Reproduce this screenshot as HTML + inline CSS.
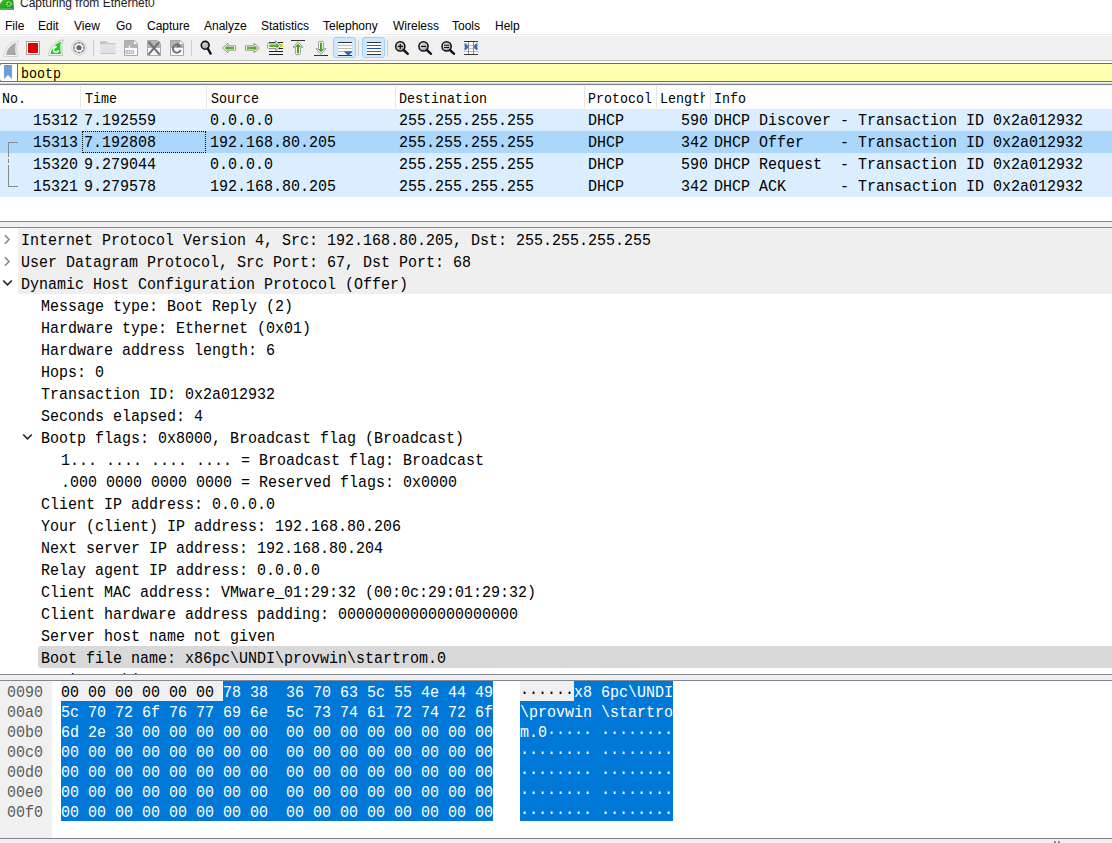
<!DOCTYPE html><html><head><meta charset="utf-8"><style>
*{margin:0;padding:0;box-sizing:border-box}
html,body{width:1112px;height:843px;overflow:hidden;background:#fff}
body{position:relative;font-family:"Liberation Sans",sans-serif;color:#000}
.a{position:absolute}
.m{font-family:"Liberation Mono",monospace;white-space:pre}
.menu{top:19px;font-size:12px;line-height:15px;white-space:nowrap;color:#000}
.hdr{top:86px;height:22px;font-size:13.333px;line-height:22px;overflow:hidden}
.hdr span{display:inline-block;transform:translateY(1.5px) scaleY(1.08);transform-origin:0 0}
.sep{top:86px;width:1px;height:22px;background:#e5e5e5}
.row{left:0;width:1112px;height:22px;background:#daeeff}
.row span{position:absolute;top:0;font-size:15px;line-height:22px;transform:translateY(0.6px) scaleY(1.1);transform-origin:0 0}
.det{height:22px;font-size:15px;line-height:22px;transform:translateY(1.6px) scaleY(1.1);transform-origin:0 0}
.hex{height:20px;font-size:15px;line-height:20px;transform:translateY(1.7px) scaleY(1.1);transform-origin:0 0}
</style></head><body>
<svg class="a" style="left:0;top:0" width="16" height="11"><defs><linearGradient id="tg" x1="0" y1="0" x2="1" y2="1"><stop offset="0" stop-color="#3cc21e"/><stop offset="1" stop-color="#158a20"/></linearGradient></defs><path d="M0 9.8 L0 3.5 L2.8 0 L13.2 0 L14 9.8 Z" fill="url(#tg)"/><path d="M1 8.6 H13" stroke="#7cc47c" stroke-width="0.8" opacity="0.7"/><circle cx="9" cy="4.1" r="2.2" fill="none" stroke="#d8ecd8" stroke-width="1.3" stroke-dasharray="1 0.8"/></svg>
<div class="a" style="left:20px;top:-4px;font-size:12px;line-height:14px;white-space:nowrap;color:#1a1a1a">Capturing from Ethernet0</div>
<div class="a menu" style="left:5px">File</div>
<div class="a menu" style="left:38px">Edit</div>
<div class="a menu" style="left:74px">View</div>
<div class="a menu" style="left:116px">Go</div>
<div class="a menu" style="left:147px">Capture</div>
<div class="a menu" style="left:204px">Analyze</div>
<div class="a menu" style="left:261px">Statistics</div>
<div class="a menu" style="left:323px">Telephony</div>
<div class="a menu" style="left:393px">Wireless</div>
<div class="a menu" style="left:452px">Tools</div>
<div class="a menu" style="left:495px">Help</div>
<div class="a" style="left:0;top:34px;width:1112px;height:1px;background:#efefef"></div>
<div class="a" style="left:0;top:36px;width:1112px;height:24px;background:#f0f0f0"></div>
<div class="a" style="left:0;top:60px;width:1112px;height:1px;background:#bebebe"></div>
<svg class="a" style="left:0;top:35px" width="500" height="26" viewBox="0 35 500 26">
<defs>
<linearGradient id="gfold" x1="0" y1="0" x2="0" y2="1"><stop offset="0" stop-color="#c4c4c4"/><stop offset="1" stop-color="#dedede"/></linearGradient>
<linearGradient id="gmag" x1="0" y1="0" x2="1" y2="1"><stop offset="0" stop-color="#e8e8e8"/><stop offset="1" stop-color="#9a9a9a"/></linearGradient>
</defs>
<!-- shark fin gray -->
<path d="M3.5 56.5 C4.5 48 10 42 18.5 41 L17.2 43.5 C16.5 48 16.5 52 17.8 56.5 Z" fill="#f7f7f7" stroke="#d2d2d2" stroke-width="1"/>
<path d="M6 55 C7.2 49 10.5 44.8 16 43 C15 46 15 51 16 55 Z" fill="#a8a8a8"/>
<!-- stop -->
<rect x="26.5" y="41.5" width="13" height="13" fill="#fdfdfd" stroke="#a2a2a2" stroke-width="1"/>
<rect x="28" y="43" width="10" height="10" fill="#e00000"/>
<!-- restart fin green -->
<path d="M48.5 55.5 C49.5 47 55 41 63.5 40 L62.2 42.5 C61.5 47 61.5 51 62.8 55.5 Z" fill="#f7f7f7" stroke="#c4c4c4" stroke-width="1"/>
<path d="M50.5 54 C51.8 48 55.5 43.5 61 41.8 C60 45 60 50 61 54 Z" fill="#1ecf1e"/>
<path d="M58.6 50.2 A2.6 2.6 0 1 1 55.6 47" fill="none" stroke="#fff" stroke-width="1.5"/>
<path d="M54.2 45.2 L57.4 46.8 L54.6 49 Z" fill="#fff"/>
<!-- gear -->
<circle cx="79" cy="47.7" r="7.3" fill="#f8f8f8" stroke="#cdcdcd" stroke-width="1"/>
<circle cx="79" cy="47.7" r="5.9" fill="#8c8c8c"/>
<circle cx="79" cy="47.7" r="3.3" fill="none" stroke="#fff" stroke-width="1.3"/>
<path d="M82.05 48.96 L83.53 49.58" stroke="#fff" stroke-width="1.5"/><path d="M80.26 50.75 L80.88 52.23" stroke="#fff" stroke-width="1.5"/><path d="M77.74 50.75 L77.12 52.23" stroke="#fff" stroke-width="1.5"/><path d="M75.95 48.96 L74.47 49.58" stroke="#fff" stroke-width="1.5"/><path d="M75.95 46.44 L74.47 45.82" stroke="#fff" stroke-width="1.5"/><path d="M77.74 44.65 L77.12 43.17" stroke="#fff" stroke-width="1.5"/><path d="M80.26 44.65 L80.88 43.17" stroke="#fff" stroke-width="1.5"/><path d="M82.05 46.44 L83.53 45.82" stroke="#fff" stroke-width="1.5"/>
<circle cx="79" cy="47.7" r="2.3" fill="#6a6a6a"/>
<!-- sep -->
<rect x="93" y="40" width="1" height="16" fill="#cdcdcd"/>
<!-- folder -->
<path d="M100 42.2 Q100 41 101.2 41 L106.3 41 L108 43 L115.6 43 L115.6 44.5 L100 44.5 Z" fill="#c7c7c7"/>
<rect x="100.2" y="45.2" width="15.4" height="8.6" fill="#e1e1e1"/>
<rect x="100.6" y="53" width="14.8" height="1" fill="#c6c6c6"/>
<!-- doc 010 -->
<path d="M124.5 40.5 L134.5 40.5 L137.5 43.5 L137.5 55.5 L124.5 55.5 Z" fill="#fbfbfb" stroke="#a9a9a9"/>
<path d="M125 41 L134.3 41 L137 43.8 L137 48 L125 48 Z" fill="#b3b3b3"/>
<path d="M134 41 L137 44 L134 44 Z" fill="#fff"/>
<path d="M128.5 47.8 L129.5 45 L130.5 47.8 Z" fill="#fff"/>
<text x="125.2" y="54.2" font-family="Liberation Sans" font-weight="bold" font-size="5.6" fill="#9c9c9c" letter-spacing="-0.2">010</text>
<!-- close doc -->
<path d="M147.5 40.5 L157.5 40.5 L160.5 43.5 L160.5 55.5 L147.5 55.5 Z" fill="#fbfbfb" stroke="#a9a9a9"/>
<path d="M148 41 L157.3 41 L160 43.8 L160 48 L148 48 Z" fill="#b3b3b3"/>
<path d="M157 41 L160 44 L157 44 Z" fill="#fff"/>
<path d="M148.6 41.8 L159.6 54.6 M159.4 41.8 L148.4 54.6" stroke="#707070" stroke-width="2.1"/>
<!-- reload doc -->
<path d="M170.5 40.5 L180.5 40.5 L183.5 43.5 L183.5 55.5 L170.5 55.5 Z" fill="#fbfbfb" stroke="#a9a9a9"/>
<path d="M171 41 L180.3 41 L183 43.8 L183 48 L171 48 Z" fill="#b3b3b3"/>
<path d="M180 41 L183 44 L180 44 Z" fill="#fff"/>
<path d="M178.6 45 A4 4 0 1 0 180.6 50.2" fill="none" stroke="#707070" stroke-width="2"/>
<path d="M181.8 46.8 L177.2 42.6 L176.6 47.6 Z" fill="#707070"/>
<!-- sep -->
<rect x="191" y="40" width="1" height="16" fill="#cdcdcd"/>
<!-- find -->
<circle cx="205.2" cy="45.3" r="3.9" fill="url(#gmag)" stroke="#111" stroke-width="1.6"/>
<path d="M207.8 48.5 L210.6 53.6" stroke="#111" stroke-width="2.4" stroke-linecap="round"/>
<!-- back -->
<path d="M222.5 48 L228 43.2 L228 45.8 L235.5 45.8 L235.5 50.2 L228 50.2 L228 52.8 Z" fill="#fff" stroke="#8a8a8a" stroke-width="0.9"/>
<path d="M224.5 48 L227.6 45.2 L227.6 46.8 L234 46.8 L234 49.2 L227.6 49.2 L227.6 50.8 Z" fill="#54b02a"/>
<!-- fwd -->
<path d="M259.5 48 L254 43.2 L254 45.8 L245.5 45.8 L245.5 50.2 L254 50.2 L254 52.8 Z" fill="#fff" stroke="#8a8a8a" stroke-width="0.9"/>
<path d="M257.5 48 L254.4 45.2 L254.4 46.8 L247 46.8 L247 49.2 L254.4 49.2 L254.4 50.8 Z" fill="#54b02a"/>
<!-- go to packet -->
<rect x="269" y="42" width="14" height="1" fill="#222"/>
<rect x="269" y="48" width="14" height="1" fill="#222"/>
<rect x="269" y="51" width="14" height="1" fill="#222"/>
<rect x="269" y="54" width="14" height="1" fill="#222"/>
<rect x="280" y="44" width="3" height="3" fill="#f5da20"/>
<path d="M281.5 45.8 L275.5 40.8 L275.5 43.2 L268.8 43.2 Q267.5 43.2 267.5 44.5 L267.5 47.1 Q267.5 48.4 268.8 48.4 L275.5 48.4 L275.5 50.8 Z" fill="#fff" stroke="#8c8c8c" stroke-width="0.9"/>
<path d="M279.8 45.8 L276.2 42.8 L276.2 44.6 L269.3 44.6 L269.3 47 L276.2 47 L276.2 48.8 Z" fill="#58b228"/>
<!-- first packet -->
<rect x="291" y="40" width="14" height="1" fill="#333"/>
<path d="M298 41.8 L293 47.2 L295.6 47.2 L295.6 53.5 Q295.6 54.6 296.7 54.6 L299.3 54.6 Q300.4 54.6 300.4 53.5 L300.4 47.2 L303 47.2 Z" fill="#fff" stroke="#8c8c8c" stroke-width="0.9"/>
<path d="M298 43.6 L295 46.9 L297 46.9 L297 53.2 L299 53.2 L299 46.9 L301 46.9 Z" fill="#46a31c"/>
<!-- last packet -->
<rect x="314" y="55" width="14" height="1" fill="#333"/>
<path d="M321 54.2 L316 48.8 L318.6 48.8 L318.6 42.5 Q318.6 41.4 319.7 41.4 L322.3 41.4 Q323.4 41.4 323.4 42.5 L323.4 48.8 L326 48.8 Z" fill="#fff" stroke="#8c8c8c" stroke-width="0.9"/>
<path d="M321 52.4 L318 49.1 L320 49.1 L320 42.8 L322 42.8 L322 49.1 L324 49.1 Z" fill="#46a31c"/>
<!-- autoscroll button -->
<rect x="333.5" y="37.5" width="22" height="20" rx="2.5" fill="#cce8ff" stroke="#99d1ff"/>
<rect x="338" y="42" width="14" height="14" fill="#fcfcfa"/>
<rect x="338" y="42" width="14" height="1" fill="#333"/>
<rect x="338" y="45" width="14" height="1" fill="#b8bcb8"/>
<rect x="338" y="48" width="14" height="1" fill="#b8bcb8"/>
<rect x="338" y="51" width="14" height="1" fill="#b8bcb8"/>
<rect x="338" y="55" width="14" height="1" fill="#333"/>
<path d="M344.5 51.2 Q344 53 346.5 54 L347.5 55.5 L349 55.5 L350 54 Q352.5 53 352 51.2 Z" fill="#2f6ab0"/>
<!-- sep -->
<rect x="358" y="40" width="1" height="16" fill="#cdcdcd"/>
<!-- colorize button -->
<rect x="362.5" y="37.5" width="22" height="20" rx="2.5" fill="#cce8ff" stroke="#99d1ff"/>
<rect x="367" y="42" width="14" height="13" fill="#fcfcfa"/>
<rect x="367" y="42" width="14" height="1" fill="#333"/>
<rect x="367" y="45" width="14" height="1" fill="#e02020"/>
<rect x="367" y="48" width="14" height="1" fill="#2850a0"/>
<rect x="367" y="51" width="14" height="1" fill="#705090"/>
<rect x="367" y="54" width="14" height="1" fill="#333"/>
<!-- sep -->
<rect x="387" y="40" width="1" height="16" fill="#cdcdcd"/>
<!-- zoom in/out/normal -->
<g>
<circle cx="400.3" cy="46.4" r="4.6" fill="url(#gmag)" stroke="#111" stroke-width="1.5"/>
<path d="M403.6 50 L407.8 53.8" stroke="#111" stroke-width="2.4" stroke-linecap="round"/>
<path d="M397.8 46.4 H402.8 M400.3 43.9 V48.9" stroke="#111" stroke-width="1.2"/>
<circle cx="423.5" cy="46.4" r="4.6" fill="url(#gmag)" stroke="#111" stroke-width="1.5"/>
<path d="M426.8 50 L431 53.8" stroke="#111" stroke-width="2.4" stroke-linecap="round"/>
<path d="M421 46.4 H426" stroke="#111" stroke-width="1.2"/>
<circle cx="446.6" cy="46.4" r="4.6" fill="url(#gmag)" stroke="#111" stroke-width="1.5"/>
<path d="M449.9 50 L454.1 53.8" stroke="#111" stroke-width="2.4" stroke-linecap="round"/>
<path d="M444.1 45.3 H449.1 M444.1 47.5 H449.1" stroke="#111" stroke-width="1.1"/>
</g>
<!-- resize columns -->
<rect x="464" y="41" width="14" height="14" fill="#fbfbfb"/>
<rect x="464" y="41" width="14" height="1" fill="#333"/>
<rect x="464" y="54" width="14" height="1" fill="#333"/>
<rect x="464" y="45" width="14" height="1" fill="#c0c0c0"/>
<rect x="464" y="48" width="14" height="1" fill="#c0c0c0"/>
<rect x="464" y="51" width="14" height="1" fill="#c0c0c0"/>
<rect x="468" y="42" width="1" height="12" fill="#8a8a8a"/>
<rect x="473" y="42" width="1" height="12" fill="#8a8a8a"/>
<path d="M464.6 42.8 Q466.5 43.5 468.6 46.8 Q466.5 50 464.6 50.8 Z" fill="#356fbd"/>
<path d="M477.4 42.8 Q475.5 43.5 473.4 46.8 Q475.5 50 477.4 50.8 Z" fill="#356fbd"/>
</svg>

<div class="a" style="left:0;top:63px;width:1112px;height:19px;background:#ffffaf;border-top:1px solid #6d6d6d;border-bottom:1px solid #6d6d6d"></div>
<div class="a" style="left:-1px;top:63px;width:19px;height:19px;background:#fff;border:1px solid #6d6d6d;border-radius:3px 0 0 3px"></div>
<svg class="a" style="left:4px;top:65px" width="9" height="15"><path d="M0 0 H8 V14 L4 10 L0 14 Z" fill="#6a9fd6"/></svg>
<div class="a m" style="left:21px;top:63px;font-size:13.333px;line-height:19px"><span style="display:inline-block;transform:translateY(1px) scaleY(1.1);transform-origin:0 0">bootp</span></div>
<div class="a" style="left:0;top:82px;width:1112px;height:1px;background:#fafafa"></div>
<div class="a" style="left:0;top:83px;width:1112px;height:1px;background:#cfd0d3"></div>
<div class="a" style="left:0;top:84px;width:1112px;height:1px;background:#828892"></div>
<div class="a" style="left:0;top:85px;width:1112px;height:1px;background:#f2f2f3"></div>
<div class="a m hdr" style="left:2px;width:70px"><span>No.</span></div>
<div class="a m hdr" style="left:85px;width:110px"><span>Time</span></div>
<div class="a m hdr" style="left:211px;width:180px"><span>Source</span></div>
<div class="a m hdr" style="left:399px;width:180px"><span>Destination</span></div>
<div class="a m hdr" style="left:588px;width:66px"><span>Protocol</span></div>
<div class="a m hdr" style="left:660px;width:45px"><span>Length</span></div>
<div class="a m hdr" style="left:714px;width:200px"><span>Info</span></div>
<div class="a sep" style="left:80px"></div>
<div class="a sep" style="left:206px"></div>
<div class="a sep" style="left:395px"></div>
<div class="a sep" style="left:584px"></div>
<div class="a sep" style="left:656px"></div>
<div class="a sep" style="left:710px"></div>
<div class="a row m" style="top:109px"><span style="left:33px">15312</span><span style="left:84px">7.192559</span><span style="left:210px">0.0.0.0</span><span style="left:399px">255.255.255.255</span><span style="left:588px">DHCP</span><span style="left:681px">590</span><span style="left:714px">DHCP Discover - Transaction ID 0x2a012932</span></div>
<div class="a row m" style="top:131px;background:#abd7fd"><span style="left:33px">15313</span><span style="left:84px">7.192808</span><span style="left:210px">192.168.80.205</span><span style="left:399px">255.255.255.255</span><span style="left:588px">DHCP</span><span style="left:681px">342</span><span style="left:714px">DHCP Offer    - Transaction ID 0x2a012932</span></div>
<div class="a row m" style="top:153px"><span style="left:33px">15320</span><span style="left:84px">9.279044</span><span style="left:210px">0.0.0.0</span><span style="left:399px">255.255.255.255</span><span style="left:588px">DHCP</span><span style="left:681px">590</span><span style="left:714px">DHCP Request  - Transaction ID 0x2a012932</span></div>
<div class="a row m" style="top:175px"><span style="left:33px">15321</span><span style="left:84px">9.279578</span><span style="left:210px">192.168.80.205</span><span style="left:399px">255.255.255.255</span><span style="left:588px">DHCP</span><span style="left:681px">342</span><span style="left:714px">DHCP ACK      - Transaction ID 0x2a012932</span></div>
<div class="a" style="left:82px;top:131px;width:124px;height:22px;border:1px dotted #000"></div>
<div class="a" style="left:8px;top:142px;width:10px;height:1px;background:#8a8a8a"></div>
<div class="a" style="left:8px;top:142px;width:1px;height:15px;background:#8a8a8a"></div>
<div class="a" style="left:8px;top:159px;width:1px;height:4px;background:#8a8a8a"></div>
<div class="a" style="left:8px;top:165px;width:1px;height:22px;background:#8a8a8a"></div>
<div class="a" style="left:8px;top:186px;width:10px;height:1px;background:#8a8a8a"></div>
<div class="a" style="left:0;top:221px;width:1112px;height:7px;background:#f0f0f0;border-top:1px solid #828790;border-bottom:1px solid #828790"></div>
<div class="a" style="left:0;top:228px;width:1112px;height:446px;overflow:hidden">
<div class="a" style="left:18px;top:0;width:1094px;height:66px;background:#efefef"></div>
<div class="a" style="left:38px;top:418px;width:1074px;height:22px;background:#d9d9d9;border-radius:3px 0 0 3px"></div>
<div class="a det m" style="top:0px;left:21px">Internet Protocol Version 4, Src: 192.168.80.205, Dst: 255.255.255.255</div>
<svg class="a" style="left:4px;top:6px" width="8" height="12"><path d="M0.9 1.2 L5 5.5 L0.9 9.8" fill="none" stroke="#858585" stroke-width="1.5"/></svg>
<div class="a det m" style="top:22px;left:21px">User Datagram Protocol, Src Port: 67, Dst Port: 68</div>
<svg class="a" style="left:4px;top:28px" width="8" height="12"><path d="M0.9 1.2 L5 5.5 L0.9 9.8" fill="none" stroke="#858585" stroke-width="1.5"/></svg>
<div class="a det m" style="top:44px;left:21px">Dynamic Host Configuration Protocol (Offer)</div>
<svg class="a" style="left:2px;top:51px" width="11" height="8"><path d="M1.2 1.5 L5.5 5.8 L9.8 1.5" fill="none" stroke="#262626" stroke-width="1.7"/></svg>
<div class="a det m" style="top:66px;left:41px">Message type: Boot Reply (2)</div>
<div class="a det m" style="top:88px;left:41px">Hardware type: Ethernet (0x01)</div>
<div class="a det m" style="top:110px;left:41px">Hardware address length: 6</div>
<div class="a det m" style="top:132px;left:41px">Hops: 0</div>
<div class="a det m" style="top:154px;left:41px">Transaction ID: 0x2a012932</div>
<div class="a det m" style="top:176px;left:41px">Seconds elapsed: 4</div>
<div class="a det m" style="top:198px;left:41px">Bootp flags: 0x8000, Broadcast flag (Broadcast)</div>
<svg class="a" style="left:22px;top:205px" width="11" height="8"><path d="M1.2 1.5 L5.5 5.8 L9.8 1.5" fill="none" stroke="#262626" stroke-width="1.7"/></svg>
<div class="a det m" style="top:220px;left:61px">1... .... .... .... = Broadcast flag: Broadcast</div>
<div class="a det m" style="top:242px;left:61px">.000 0000 0000 0000 = Reserved flags: 0x0000</div>
<div class="a det m" style="top:264px;left:41px">Client IP address: 0.0.0.0</div>
<div class="a det m" style="top:286px;left:41px">Your (client) IP address: 192.168.80.206</div>
<div class="a det m" style="top:308px;left:41px">Next server IP address: 192.168.80.204</div>
<div class="a det m" style="top:330px;left:41px">Relay agent IP address: 0.0.0.0</div>
<div class="a det m" style="top:352px;left:41px">Client MAC address: VMware_01:29:32 (00:0c:29:01:29:32)</div>
<div class="a det m" style="top:374px;left:41px">Client hardware address padding: 00000000000000000000</div>
<div class="a det m" style="top:396px;left:41px">Server host name not given</div>
<div class="a det m" style="top:418px;left:41px">Boot file name: x86pc\UNDI\provwin\startrom.0</div>
<div class="a det m" style="top:440px;left:41px">Magic cookie: DHCP</div>
</div>
<div class="a" style="left:0;top:674px;width:1112px;height:7px;background:#f0f0f0;border-top:1px solid #828790;border-bottom:1px solid #828790"></div>
<div class="a" style="left:0;top:681px;width:52px;height:157px;background:#f0f0f0"></div>
<div class="a" style="left:223px;top:681px;width:270px;height:20px;background:#0078d7"></div>
<div class="a" style="left:61px;top:701px;width:432px;height:120px;background:#0078d7"></div>
<div class="a" style="left:61px;top:681px;width:162px;height:20px;background:#f0f0f0"></div>
<div class="a" style="left:574px;top:681px;width:99px;height:20px;background:#0078d7"></div>
<div class="a" style="left:520px;top:701px;width:153px;height:120px;background:#0078d7"></div>
<div class="a" style="left:520px;top:681px;width:54px;height:20px;background:#f0f0f0"></div>
<div class="a hex m" style="top:681px;left:7px;color:#5c5c5c">0090</div>
<div class="a hex m" style="top:681px;left:61px">00 00 00 00 00 00 <span style="color:#fff">78 38  36 70 63 5c 55 4e 44 49</span></div>
<div class="a hex m" style="top:681px;left:520px">······<span style="color:#fff">x8 6pc\UNDI</span></div>
<div class="a hex m" style="top:701px;left:7px;color:#5c5c5c">00a0</div>
<div class="a hex m" style="top:701px;left:61px;color:#fff">5c 70 72 6f 76 77 69 6e  5c 73 74 61 72 74 72 6f</div>
<div class="a hex m" style="top:701px;left:520px;color:#fff">\provwin \startro</div>
<div class="a hex m" style="top:721px;left:7px;color:#5c5c5c">00b0</div>
<div class="a hex m" style="top:721px;left:61px;color:#fff">6d 2e 30 00 00 00 00 00  00 00 00 00 00 00 00 00</div>
<div class="a hex m" style="top:721px;left:520px;color:#fff">m.0····· ········</div>
<div class="a hex m" style="top:741px;left:7px;color:#5c5c5c">00c0</div>
<div class="a hex m" style="top:741px;left:61px;color:#fff">00 00 00 00 00 00 00 00  00 00 00 00 00 00 00 00</div>
<div class="a hex m" style="top:741px;left:520px;color:#fff">········ ········</div>
<div class="a hex m" style="top:761px;left:7px;color:#5c5c5c">00d0</div>
<div class="a hex m" style="top:761px;left:61px;color:#fff">00 00 00 00 00 00 00 00  00 00 00 00 00 00 00 00</div>
<div class="a hex m" style="top:761px;left:520px;color:#fff">········ ········</div>
<div class="a hex m" style="top:781px;left:7px;color:#5c5c5c">00e0</div>
<div class="a hex m" style="top:781px;left:61px;color:#fff">00 00 00 00 00 00 00 00  00 00 00 00 00 00 00 00</div>
<div class="a hex m" style="top:781px;left:520px;color:#fff">········ ········</div>
<div class="a hex m" style="top:801px;left:7px;color:#5c5c5c">00f0</div>
<div class="a hex m" style="top:801px;left:61px;color:#fff">00 00 00 00 00 00 00 00  00 00 00 00 00 00 00 00</div>
<div class="a hex m" style="top:801px;left:520px;color:#fff">········ ········</div>
<div class="a" style="left:0;top:838px;width:1112px;height:1px;background:#7d848f"></div>
<div class="a" style="left:0;top:839px;width:1112px;height:4px;background:#f0f0f0"></div>
<div class="a" style="left:1054px;top:841px;width:2px;height:2px;background:#909090"></div><div class="a" style="left:1058px;top:841px;width:2px;height:2px;background:#909090"></div>
</body></html>
